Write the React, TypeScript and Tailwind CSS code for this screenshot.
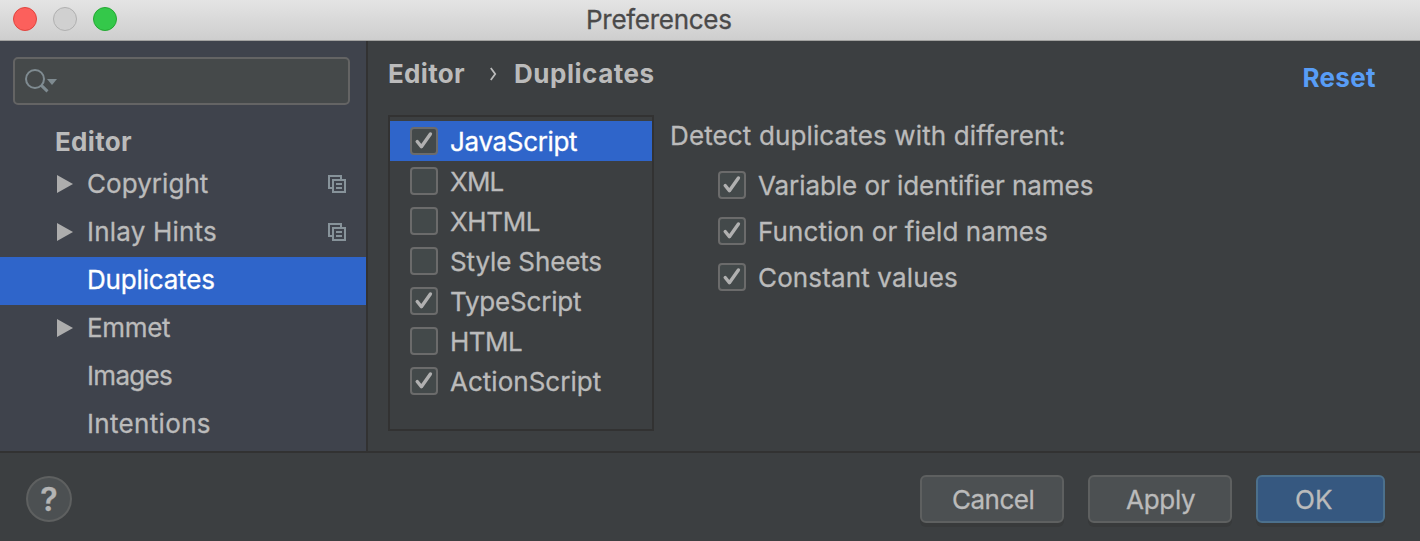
type TreeItem = { label: string; tracking: string; expandable?: boolean; project?: boolean; selected?: boolean };
type CheckItem = { label: string; tracking: string; checked?: boolean; selected?: boolean };

const tree: TreeItem[] = [
  { label: "Copyright", tracking: "tracking-[0.05px]", expandable: true, project: true },
  { label: "Inlay Hints", tracking: "tracking-[0.2px]", expandable: true, project: true },
  { label: "Duplicates", tracking: "tracking-[-0.18px]", selected: true },
  { label: "Emmet", tracking: "tracking-[-0.35px]", expandable: true },
  { label: "Images", tracking: "tracking-[-0.68px]" },
  { label: "Intentions", tracking: "tracking-[0.33px]" },
];

const languages: CheckItem[] = [
  { label: "JavaScript", tracking: "tracking-[-0.34px]", checked: true, selected: true },
  { label: "XML", tracking: "tracking-[-0.8px]" },
  { label: "XHTML", tracking: "tracking-[-0.4px]" },
  { label: "Style Sheets", tracking: "tracking-[-0.14px]" },
  { label: "TypeScript", tracking: "tracking-[-0.2px]", checked: true },
  { label: "HTML", tracking: "tracking-[-0.53px]" },
  { label: "ActionScript", tracking: "tracking-[0.02px]", checked: true },
];

const options: CheckItem[] = [
  { label: "Variable or identifier names", tracking: "tracking-[-0.06px]", checked: true },
  { label: "Function or field names", tracking: "tracking-[0.08px]", checked: true },
  { label: "Constant values", tracking: "tracking-[0.14px]", checked: true },
];

function Checkbox({ checked }: { checked?: boolean }) {
  return (
    <span className="flex size-7 shrink-0 rounded-[4px] border-2 border-[#6b6b6b] bg-[#43494a]">
      {checked && (
        <svg viewBox="0 0 24 24" className="size-6" fill="none" stroke="#b0b0b0" strokeWidth="3.4" strokeLinecap="round" strokeLinejoin="round">
          <path d="M5.2 12.5L9.4 17.7L18.4 5" />
        </svg>
      )}
    </span>
  );
}

function ProjectIcon() {
  return (
    <svg width="18" height="18" viewBox="0 0 18 18" fill="none" stroke="#87939a" strokeWidth="2">
      <path d="M4 13H1V1H13V4" />
      <path d="M5 5H17V17H5Z" />
      <path d="M8 9H14M8 13H14" />
    </svg>
  );
}

export default function App() {
  return (
    <div className="flex h-[541px] w-[1420px] flex-col overflow-hidden bg-[#3c3f41] font-[Inter,sans-serif] text-[26px] leading-[32px] whitespace-nowrap text-[#bbbbbb] [-webkit-text-stroke-width:0.3px]">
      <header className="flex h-[41px] shrink-0 border-b border-[#a2a2a0] bg-linear-to-b from-[#e4e4e4] to-[#cecece] pl-[13px]">
        <div className="flex w-[573px] gap-4 pt-[7px]">
          <span className="size-6 rounded-full border border-[#e0443e] bg-[#fc605c]" />
          <span className="size-6 rounded-full border border-[#b0b0b0] bg-[#d0d0d0]" />
          <span className="size-6 rounded-full border border-[#24a832] bg-[#34c84a]" />
        </div>
        <h1 className="pt-[4px] tracking-[-0.28px] text-[#4a4a4a]">Preferences</h1>
      </header>

      <div className="flex h-[410px] shrink-0">
        <aside className="w-[368px] shrink-0 border-r-2 border-[#323232] bg-[#3f434c]">
          <div className="mt-4 ml-[13px] flex h-12 w-[337px] rounded-[5px] border-2 border-[#646464] bg-[#45494a] pt-[9px] pl-[9px]">
            <svg width="36" height="28" viewBox="0 0 36 28" fill="none" stroke="#7f8b91">
              <circle cx="11" cy="11" r="9" strokeWidth="2" />
              <path d="M16.8 16.8L23.5 23.3" strokeWidth="3" />
              <path d="M23 11H33L28 17Z" fill="#7f8b91" stroke="none" />
            </svg>
          </div>
          <div className="mt-4 flex h-10 items-center pt-[2px] pl-[55px] font-bold tracking-[0.3px] [-webkit-text-stroke-width:0]">Editor</div>
          {tree.map((item) => (
            <div key={item.label} className={`flex h-12 items-center pb-[2px] ${item.selected ? "bg-[#2f65ca] text-white" : ""}`}>
              <span className="w-[87px] pl-[57px]">
                {item.expandable && (
                  <svg width="16" height="18" viewBox="0 0 16 18" fill="#adadad">
                    <path d="M0 0L16 9L0 18Z" />
                  </svg>
                )}
              </span>
              <span className={`w-[241px] ${item.tracking}`}>{item.label}</span>
              {item.project && <ProjectIcon />}
            </div>
          ))}
        </aside>

        <main className="flex w-[1052px] flex-col pl-5">
          <div className="flex h-[74px] items-start justify-between pt-[17px] pr-[44px] [-webkit-text-stroke-width:0]">
            <div className="flex font-bold">
              <span className="w-[102px] tracking-[0.3px]">Editor</span>
              <svg className="mt-[9px]" width="7" height="14" viewBox="0 0 7 14" fill="none" stroke="#bbbbbb" strokeWidth="1.8">
                <path d="M0.8 1L5.2 7L0.8 13" />
              </svg>
              <span className="ml-[17px] tracking-[0.53px]">Duplicates</span>
            </div>
            <span className="mt-1 font-bold tracking-[0.35px] text-[#589df6]">Reset</span>
          </div>
          <div className="flex">
            <ul className="h-[316px] w-[266px] border-2 border-[#323232] pt-1">
              {languages.map((item) => (
                <li key={item.label} className={`flex h-10 items-center gap-3 pl-5 ${item.selected ? "bg-[#2f65ca] text-white" : ""}`}>
                  <Checkbox checked={item.checked} />
                  <span className={`pt-[2px] ${item.tracking}`}>{item.label}</span>
                </li>
              ))}
            </ul>
            <section className="pt-[5px] pl-4">
              <p className="tracking-[0.13px]">Detect duplicates with different:</p>
              <div className="mt-[10px] pl-12">
                {options.map((item) => (
                  <div key={item.label} className="flex h-[46px] items-center gap-3">
                    <Checkbox checked={item.checked} />
                    <span className={`pt-[2px] ${item.tracking}`}>{item.label}</span>
                  </div>
                ))}
              </div>
            </section>
          </div>
        </main>
      </div>

      <footer className="flex h-[90px] items-start border-t-2 border-[#323232] pt-[22px] pr-[35px] pl-[26px]">
        <button className="mt-px mr-auto flex size-[46px] items-center justify-center rounded-full border-2 border-[#5e6060] bg-[#4c5052]">
          <span className="pt-[2px] text-[32px] font-semibold text-[#b4b4b4]">?</span>
        </button>
        <button className="mr-6 flex h-12 w-36 items-center rounded-[6px] border-2 border-[#5e6060] bg-[#4c5052] pt-[2px] pl-[30px] tracking-[-0.49px] shadow-[0_4px_0_#383a3b]">Cancel</button>
        <button className="mr-6 flex h-12 w-36 items-center rounded-[6px] border-2 border-[#5e6060] bg-[#4c5052] pt-[2px] pl-[36px] tracking-[-0.3px] shadow-[0_4px_0_#383a3b]">Apply</button>
        <button className="flex h-12 w-[129px] items-center rounded-[6px] border-2 border-[#4c708c] bg-[#365880] pt-[2px] pl-[37px] tracking-[0.12px] shadow-[0_4px_0_#383a3b]">OK</button>
      </footer>
    </div>
  );
}
